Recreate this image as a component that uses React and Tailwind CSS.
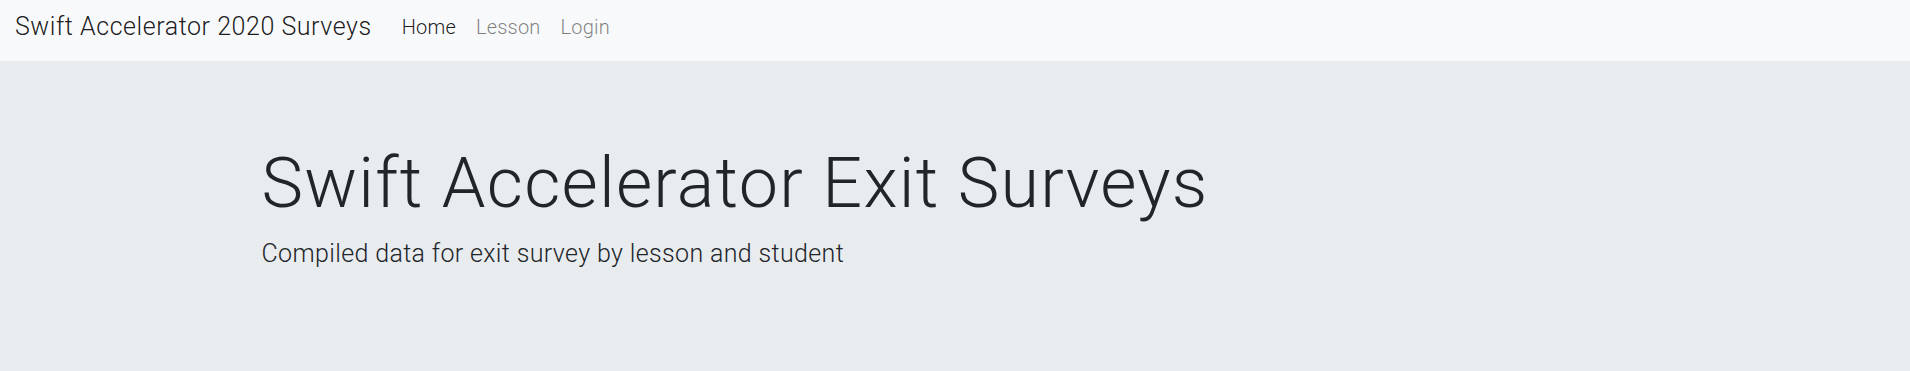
export default function App() {
  return (
    <div className="min-h-screen bg-[#e9ecef] font-['Roboto','Liberation_Sans',sans-serif] text-[#212529]">
      <nav className="flex h-[61px] items-center bg-[#f8f9fa] pb-[8px] pl-[15px]">
        <a href="#" className="mr-[20px] text-[25px] font-light leading-[37px] tracking-[0.55px] text-[rgba(0,0,0,0.9)]">
          Swift Accelerator 2020 Surveys
        </a>
        <ul className="flex text-[20px] font-light leading-[30px] tracking-[0.2px]">
          <li>
            <a href="#" className="block px-[10px] text-[rgba(0,0,0,0.9)]">Home</a>
          </li>
          <li>
            <a href="#" className="block px-[10px] text-[rgba(0,0,0,0.5)]">Lesson</a>
          </li>
          <li>
            <a href="#" className="block px-[10px] text-[rgba(0,0,0,0.5)]">Login</a>
          </li>
        </ul>
      </nav>

      <div className="py-[80px]">
        <div className="mx-auto w-[1425px] px-[19px]">
          <h1 className="mb-[10px] text-[70px] font-light leading-[84px] tracking-[1.25px]">
            Swift Accelerator Exit Surveys
          </h1>
          <p className="text-[25px] font-light leading-[37.5px] tracking-[0.36px]">
            Compiled data for exit survey by lesson and student
          </p>
        </div>
      </div>
    </div>
  );
}
